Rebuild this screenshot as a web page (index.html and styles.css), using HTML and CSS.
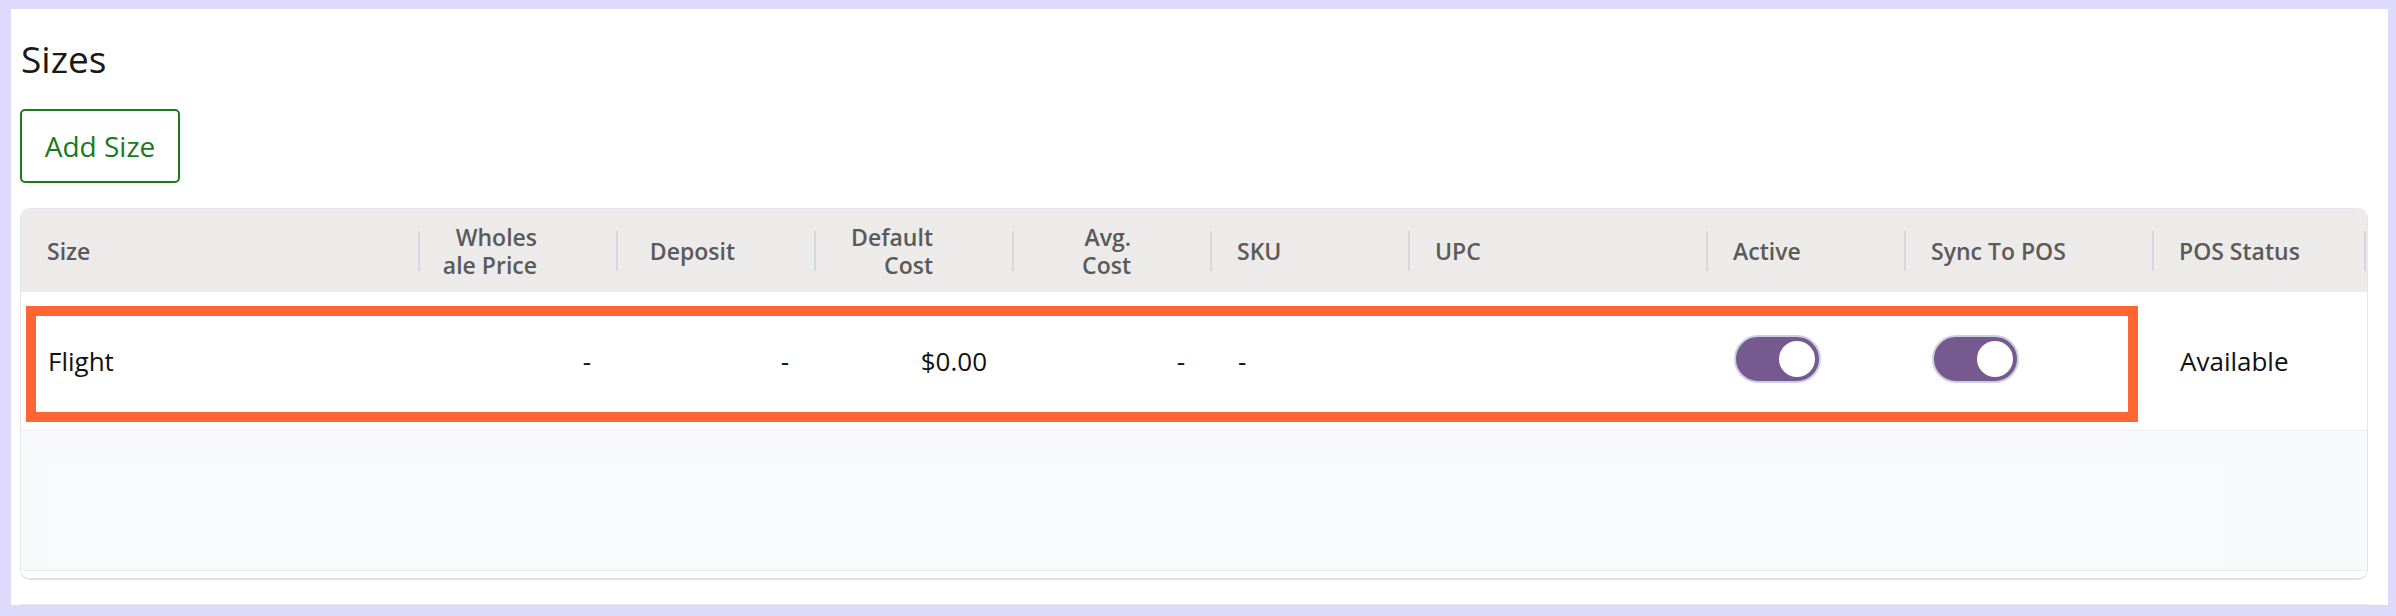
FILE: index.html
```html
<!DOCTYPE html>
<html lang="en">
<head>
<meta charset="utf-8">
<title>Sizes</title>
<link rel="stylesheet" href="styles.css">
</head>
<body>
<div class="frame">
  <main class="panel">
    <h1 class="title">Sizes</h1>
    <button class="add-btn" type="button">Add Size</button>
    <section class="grid">
      <div class="cols head">
        <div class="hc">Size</div>
        <div class="hc right"><span class="lbl narrow">Wholes ale Price</span></div>
        <div class="hc right"><span class="lbl">Deposit</span></div>
        <div class="hc right"><span class="lbl narrow">Default Cost</span></div>
        <div class="hc right"><span class="lbl narrow2">Avg. Cost</span></div>
        <div class="hc">SKU</div>
        <div class="hc">UPC</div>
        <div class="hc">Active</div>
        <div class="hc">Sync To POS</div>
        <div class="hc last">POS Status</div>
      </div>
      <div class="cols row">
        <div class="dc">Flight</div>
        <div class="dc right">-</div>
        <div class="dc right">-</div>
        <div class="dc right">$0.00</div>
        <div class="dc right">-</div>
        <div class="dc">-</div>
        <div class="dc"></div>
        <div class="dc"><span class="toggle"><span class="knob"></span></span></div>
        <div class="dc"><span class="toggle"><span class="knob"></span></span></div>
        <div class="dc">Available</div>
        <div class="highlight"></div>
      </div>
      <div class="empty">
        <div class="empty-inner"></div>
      </div>
      <div class="hscroll"></div>
    </section>
    <div class="foot-line"></div>
  </main>
</div>
</body>
</html>
```

FILE: styles.css
```css
* { box-sizing: border-box; }
html, body { margin: 0; padding: 0; }
body {
  background: #dddafc;
  font-family: "Open Sans", "Noto Sans", "Liberation Sans", sans-serif;
  width: 2396px;
  height: 616px;
  overflow: hidden;
}
.frame {
  padding: 9px 8px 11px 11px;
  height: 616px;
}
.panel {
  background: #ffffff;
  height: 596px;
  padding: 25px 20px 0 9px;
  display: flex;
  flex-direction: column;
  align-items: flex-start;
}
.title {
  margin: 0;
  font-size: 37px;
  line-height: 50px;
  font-weight: 400;
  color: #1a1a1a;
  padding-left: 1px;
}
.add-btn {
  margin-top: 25px;
  width: 160px;
  height: 74px;
  border: 2px solid #1a7a1a;
  border-radius: 5px;
  background: #ffffff;
  color: #1a7a1a;
  font-family: inherit;
  font-size: 28px;
  padding: 0;
}
.grid {
  margin-top: 25px;
  width: 2348px;
  border: 1px solid #e4e6eb;
  border-bottom: 2px solid #e2e2e2;
  border-radius: 10px;
  overflow: hidden;
  background: #ffffff;
}
.cols {
  display: grid;
  grid-template-columns: 398px 198px 198px 198px 198px 198px 298px 198px 248px 1fr;
}
.head {
  height: 83px;
  background: #ecebe9;
}
.hc {
  position: relative;
  display: flex;
  align-items: center;
  padding-left: 26px;
  font-size: 23px;
  line-height: 28px;
  font-weight: 600;
  color: #5a5a5a;
}
.hc + .hc::before {
  content: "";
  position: absolute;
  left: -1px;
  top: 22px;
  width: 2px;
  height: 40px;
  background: #d4d7dc;
}
.hc.last::after {
  content: "";
  position: absolute;
  right: 1px;
  top: 22px;
  width: 2px;
  height: 40px;
  background: #d4d7dc;
}
.hc.right {
  justify-content: flex-end;
  padding-left: 0;
  padding-right: 80px;
  text-align: right;
}
.lbl.narrow { width: 96px; }
.lbl.narrow2 { width: 54px; }
.row {
  position: relative;
  height: 139px;
  border-bottom: 1px solid #eceef3;
}
.dc {
  display: flex;
  align-items: center;
  padding-left: 27px;
  font-size: 26px;
  line-height: 30px;
  color: #111111;
}
.dc.right {
  justify-content: flex-end;
  padding-left: 0;
  padding-right: 26px;
}
.toggle {
  position: relative;
  display: inline-block;
  width: 87px;
  height: 48px;
  border: 2px solid #c9d1e1;
  border-radius: 24px;
  background: #765a8f;
  margin-top: -4px;
}
.knob {
  position: absolute;
  right: 4px;
  top: 4px;
  width: 36px;
  height: 36px;
  border-radius: 50%;
  background: #ffffff;
}
.highlight {
  position: absolute;
  left: 5px;
  top: 14px;
  width: 2112px;
  height: 116px;
  border: 10px solid #ff6633;
  pointer-events: none;
}
.empty {
  height: 140px;
  background: #f8f9fb;
  border-bottom: 1px solid #eceef3;
  padding: 37px 145px 6px 28px;
}
.empty-inner {
  height: 96px;
  background: #f9fafc;
}
.hscroll {
  height: 7px;
  background: #ffffff;
}
.foot-line {
  margin-top: 24px;
  width: 2349px;
  height: 1px;
  background: #e6e6e6;
}
```
